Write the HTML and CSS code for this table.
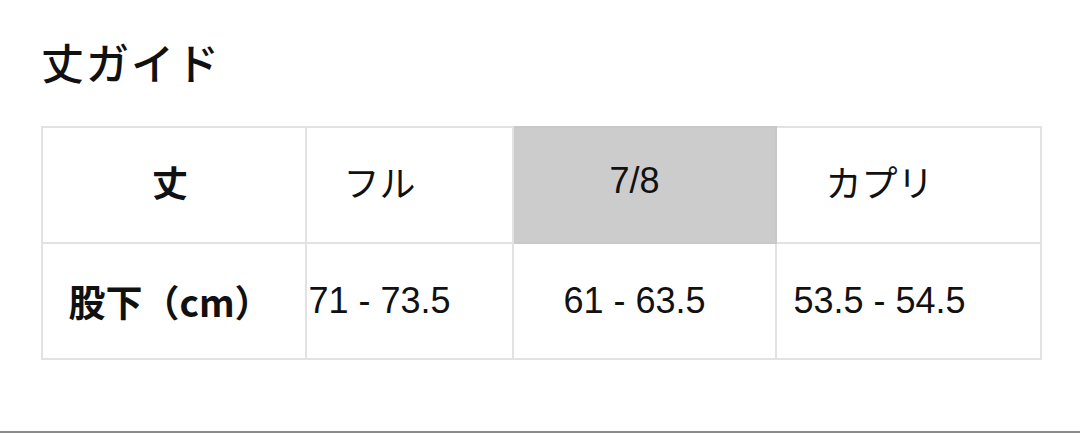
FILE: index.html
```html
<!DOCTYPE html>
<html lang="ja">
<head>
<meta charset="utf-8">
<link rel="stylesheet" href="styles.css">
</head>
<body>
<div class="page">
  <h2 class="title">丈ガイド</h2>
  <table class="guide">
    <colgroup>
      <col class="c1"><col class="c2"><col class="c3"><col class="c4">
    </colgroup>
    <tr class="head">
      <th class="k1">丈</th>
      <td class="k2">フル</td>
      <td class="k3 active">7/8</td>
      <td class="k4">カプリ</td>
    </tr>
    <tr class="body">
      <th class="k1">股下（cm）</th>
      <td class="k2">71 - 73.5</td>
      <td class="k3">61 - 63.5</td>
      <td class="k4">53.5 - 54.5</td>
    </tr>
  </table>
</div>
</body>
</html>
```
FILE: styles.css
```css
html, body {
  margin: 0;
  padding: 0;
  background: #fff;
}
.page {
  box-sizing: border-box;
  height: 433px;
  padding: 34px 0 0 41px;
  border-bottom: 2px solid #8a8a8a;
  font-family: "Liberation Sans", "Noto Sans CJK JP", sans-serif;
  color: #111;
}
.title {
  margin: 0;
  font-family: "Noto Sans CJK JP", sans-serif;
  font-weight: 500;
  font-size: 43px;
  line-height: 54px;
  letter-spacing: 2px;
}
.guide {
  margin-top: 38px;
  border-collapse: collapse;
  width: 999px;
  table-layout: fixed;
  border: 2px solid #e2e2e2;
}
.c1 { width: 264px; }
.c2 { width: 207px; }
.c3 { width: 263px; }
.c4 { width: 265px; }
.guide th, .guide td {
  border: 2px solid #e2e2e2;
  text-align: center;
  padding: 0;
  font-size: 36px;
  font-weight: 400;
  white-space: nowrap;
}
.head th, .head td { height: 106px; padding-bottom: 8px; }
.body th, .body td { height: 114px; }
.head th, .head td { font-family: "Noto Sans CJK JP", sans-serif; }
.head .k3 { font-family: "Liberation Sans", sans-serif; }
.guide th {
  font-family: "Noto Sans CJK JP", sans-serif;
  font-weight: 700;
}
.body th { font-size: 37px; }
.k1 { padding-right: 8px !important; }
.k2 { padding-right: 60px !important; }
.k3 { padding-right: 20px !important; }
.k4 { padding-right: 58px !important; }
.active {
  background: #cccccc;
  border-color: #c8c8c8 !important;
}
```
